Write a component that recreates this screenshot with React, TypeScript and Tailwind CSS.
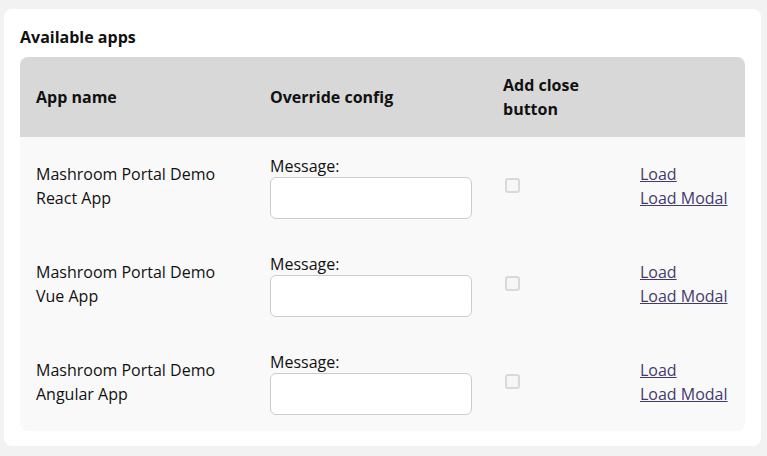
const apps = [
  "Mashroom Portal Demo React App",
  "Mashroom Portal Demo Vue App",
  "Mashroom Portal Demo Angular App",
];

function AppRow({ name }: { name: string }) {
  return (
    <tr className="h-[98px]">
      <td className="pl-4 pr-4 align-middle">{name}</td>
      <td className="pl-4 pr-4 align-middle">
        <div className="flex flex-col">
          <label className="leading-6 -mb-[1px]">Message:</label>
          <input
            type="text"
            className="w-[202px] h-[42px] bg-white border border-[#cccccc] rounded-md px-2 outline-none"
          />
        </div>
      </td>
      <td className="pl-4 align-middle">
        <div className="w-[15px] h-[15px] ml-[2px] -mt-[1px] border-2 border-[#d9d9d9] rounded-[3px] bg-[#f6f6f6]" />
      </td>
      <td className="pl-4 align-middle">
        <div className="flex flex-col">
          <a href="#" className="underline text-[#43396f] leading-6">
            Load
          </a>
          <a href="#" className="underline text-[#43396f] leading-6">
            Load Modal
          </a>
        </div>
      </td>
    </tr>
  );
}

export default function App() {
  return (
    <div
      className="w-[767px] h-[456px] bg-[#f2f2f2] pt-[9px] pl-[4px] pr-[6px] text-[16px] text-[#111111]"
      style={{ fontFamily: "'Open Sans', sans-serif" }}
    >
      <div className="bg-white rounded-lg px-4 pt-[16px] pb-[15px]">
        <h2 className="font-bold leading-[24px] mb-[8px]">Available apps</h2>
        <div className="rounded-lg overflow-hidden bg-[#f9f9f9]">
          <table className="w-full border-collapse table-fixed text-left">
            <colgroup>
              <col className="w-[234px]" />
              <col className="w-[233px]" />
              <col className="w-[137px]" />
              <col />
            </colgroup>
            <thead>
              <tr className="bg-[#d8d8d8] h-[80px]">
                <th className="pl-4 font-bold leading-6">App name</th>
                <th className="pl-4 font-bold leading-6">Override config</th>
                <th className="pl-4 pr-8 font-bold leading-6">Add close button</th>
                <th />
              </tr>
            </thead>
            <tbody className="leading-6">
              {apps.map((a) => (
                <AppRow key={a} name={a} />
              ))}
            </tbody>
          </table>
        </div>
      </div>
    </div>
  );
}
